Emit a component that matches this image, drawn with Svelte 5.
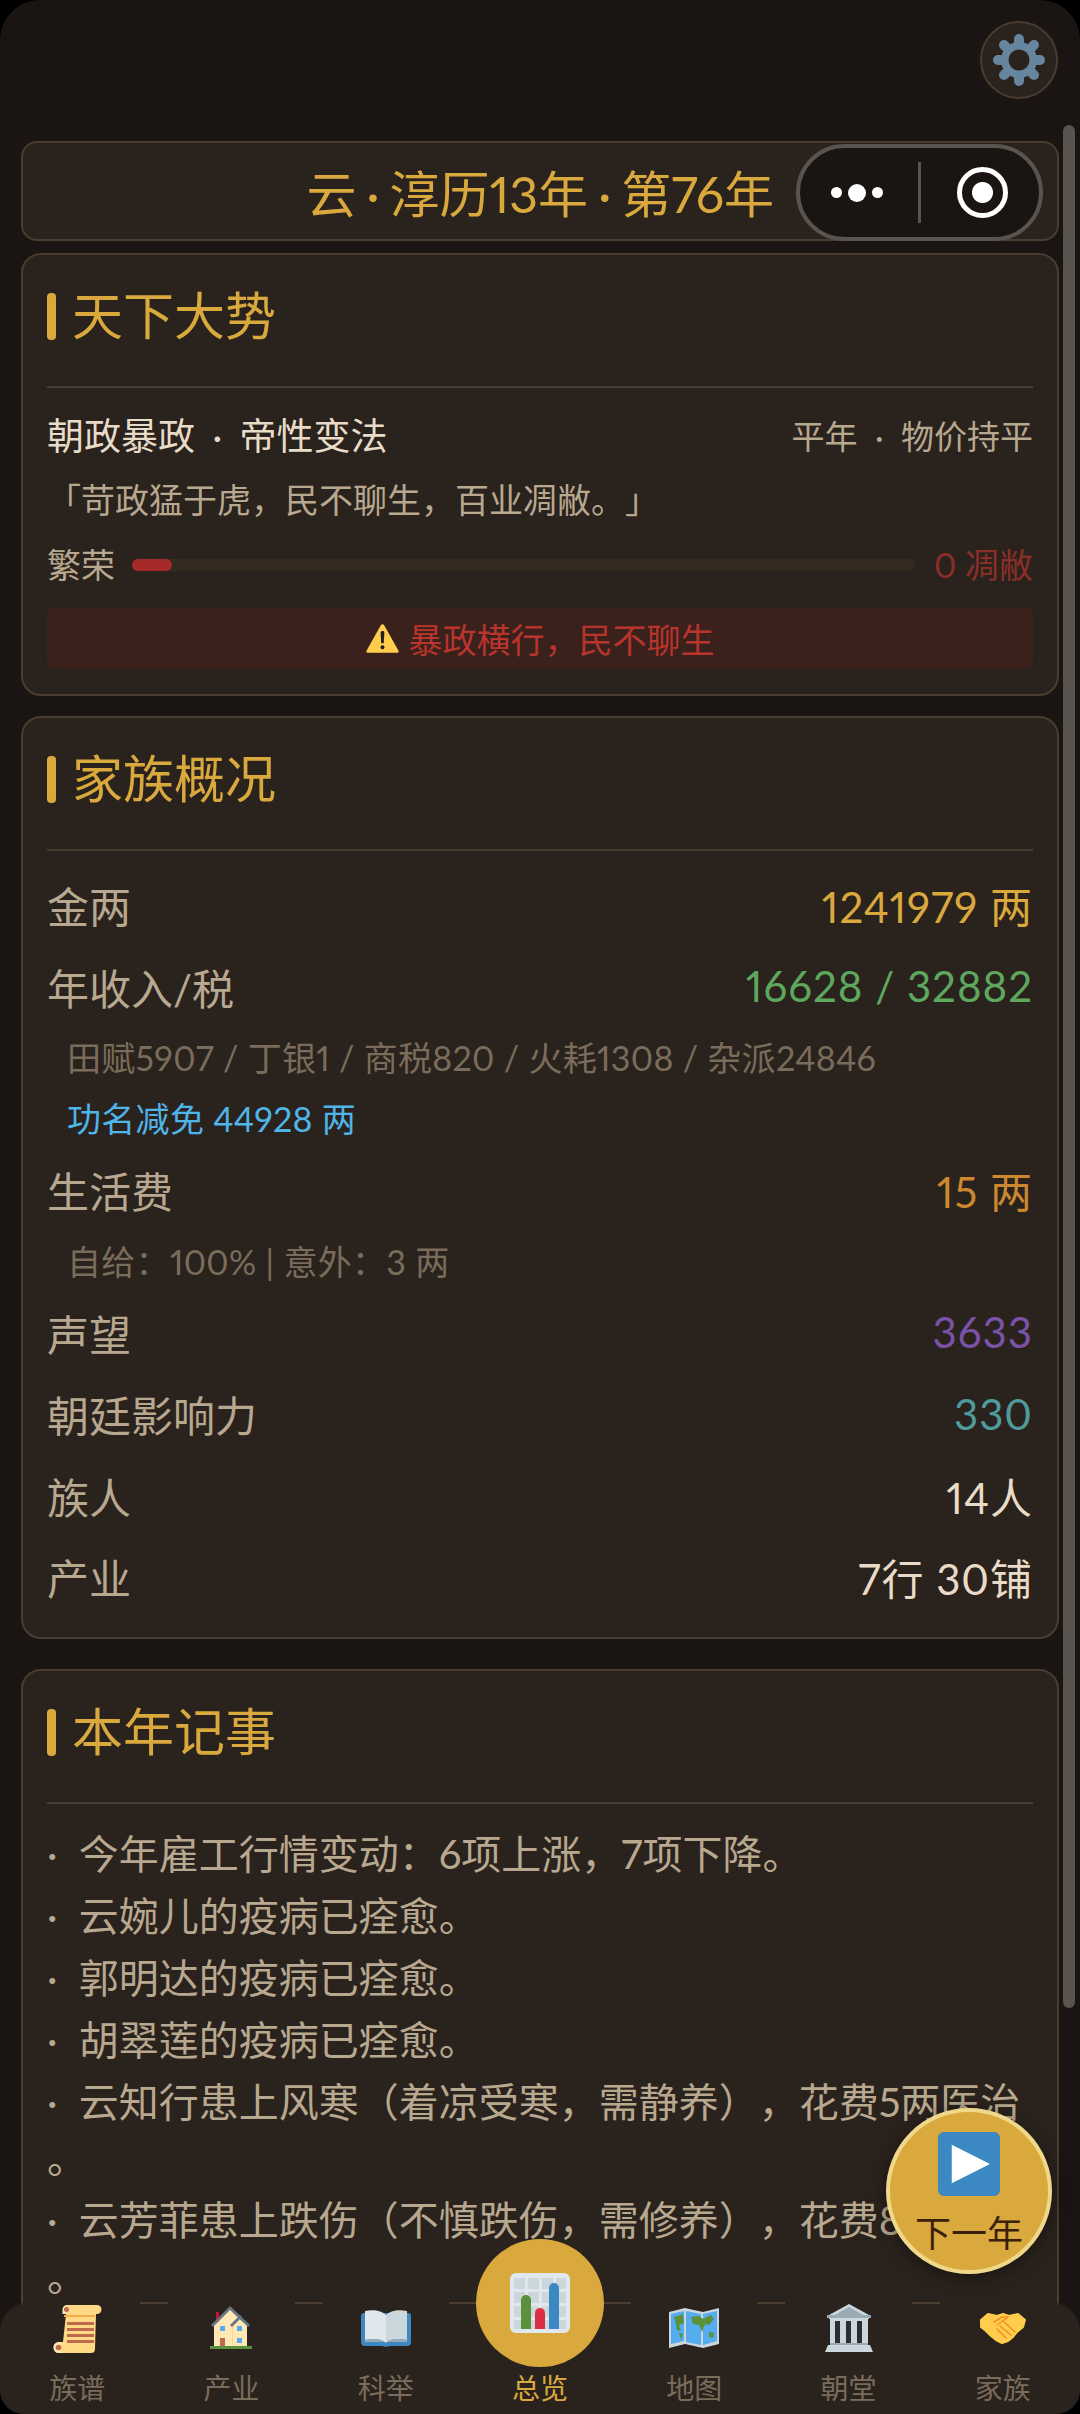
<script>
  const rows1 = [
    { label: '金两', value: '1241979 两', cls: 'gold' },
    { label: '年收入/税', value: '16628 / 32882', cls: 'green' }
  ];
  const rows2 = [
    { label: '声望', value: '3633', cls: 'purple' },
    { label: '朝廷影响力', value: '330', cls: 'teal' },
    { label: '族人', value: '14人', cls: 'white' },
    { label: '产业', value: '7行 30铺', cls: 'white' }
  ];
  const logs = [
    '· 今年雇工行情变动：6项上涨，7项下降。',
    '· 云婉儿的疫病已痊愈。',
    '· 郭明达的疫病已痊愈。',
    '· 胡翠莲的疫病已痊愈。',
    '· 云知行患上风寒（着凉受寒，需静养），花费5两医治。',
    '· 云芳菲患上跌伤（不慎跌伤，需修养），花费8两医治。',
    '· 张氏的疫病已痊愈。'
  ];
  const tabs = [
    { name: '族谱', icon: 'scroll' },
    { name: '产业', icon: 'house' },
    { name: '科举', icon: 'book' },
    { name: '总览', icon: 'chart', active: true },
    { name: '地图', icon: 'map' },
    { name: '朝堂', icon: 'bank' },
    { name: '家族', icon: 'hands' }
  ];
</script>

<div class="screen">
  <div class="topbar">
    <button class="gear" aria-label="设置">
      <svg viewBox="-26 -26 52 52" width="52" height="52">
        <g stroke="#66859f" stroke-width="10" stroke-linecap="round">
          <path d="M0-21V21M-21 0H21M-15-15 15 15M-15 15 15-15"/>
        </g>
        <circle r="18" fill="#66859f"/>
        <circle r="10.500" fill="#2a221d"/>
      </svg>
    </button>
  </div>

  <div class="content">
    <div class="card title-card">
      <span class="era">云<i>·</i>淳历13年<i>·</i>第76年</span>
    </div>

    <section class="card">
      <h2 class="head">天下大势</h2>
      <div class="split">
        <span class="policy">朝政暴政 · 帝性变法</span>
        <span class="harvest">平年 · 物价持平</span>
      </div>
      <p class="quote">「苛政猛于虎，民不聊生，百业凋敝。」</p>
      <div class="meter">
        <span class="meter-label">繁荣</span>
        <div class="track"><div class="fill" style="width: 5.1%"></div></div>
        <span class="meter-value">0 凋敝</span>
      </div>
      <div class="alert">
        <svg viewBox="0 0 36 36" width="33" height="33">
          <path fill="#ffcc4d" d="M2.2 33.500c-1.600 0-2.300-1.100-1.500-2.500L16.300 3.400c.8-1.400 2.600-1.400 3.400 0L35.300 31c.8 1.400.1 2.500-1.500 2.500z"/>
          <path fill="#231f20" d="M15.800 27.500a2.200 2.200 0 1 1 4.400 0 2.200 2.200 0 0 1-4.400 0zM16 11.500c0-1.200.9-1.800 2-1.800s2 .6 2 1.800c0 3.600-.5 8.800-.5 10.500 0 1-.7 1.300-1.500 1.300s-1.500-.3-1.500-1.300c0-1.700-.5-6.900-.5-10.500z"/>
        </svg>
        <span>暴政横行，民不聊生</span>
      </div>
    </section>

    <section class="card">
      <h2 class="head">家族概况</h2>
      <div class="rows">
        {#each rows1 as r}
          <div class="row"><span>{r.label}</span><span class="val {r.cls}">{r.value}</span></div>
        {/each}
        <div class="sub">田赋5907 / 丁银1 / 商税820 / 火耗1308 / 杂派24846</div>
        <div class="sub blue">功名减免 44928 两</div>
        <div class="row"><span>生活费</span><span class="val orange">15 两</span></div>
        <div class="sub">自给：100% | 意外：3 两</div>
        {#each rows2 as r}
          <div class="row"><span>{r.label}</span><span class="val {r.cls}">{r.value}</span></div>
        {/each}
      </div>
    </section>

    <section class="card">
      <h2 class="head">本年记事</h2>
      <div class="logs">
        {#each logs as line}
          <p>{line}</p>
        {/each}
      </div>
    </section>
  </div>

  <button class="next">
    <svg viewBox="0 0 36 36" width="62" height="64" preserveAspectRatio="none">
      <rect width="36" height="36" rx="3.500" fill="#3b88c3"/>
      <path fill="#fff" d="M8 7.200 30.200 18 8 28.800z"/>
    </svg>
    <span>下一年</span>
  </button>

  <nav class="tabs">
    {#each tabs as t}
      <div class="tab" class:active={t.active}>
        <div class="icon">
          {#if t.icon === 'scroll'}
            <svg viewBox="0 0 49 49" width="49" height="49">
              <path fill="#ffd983" d="M14 1h30a4.500 4.500 0 0 1 0 9h-1l-1 35a4 4 0 0 1-4 4H6a5.500 5.500 0 0 1 0-11h4z"/>
              <path fill="#ffe8b6" d="M14 1a4.500 4.500 0 0 0-4.500 4.500V10h4zM6 38a5.500 5.500 0 0 0 0 11h6a5.500 5.500 0 0 1-1-11z"/>
              <path fill="#f4ac4b" d="M11 11h31v2H11z"/>
              <circle cx="13.500" cy="5.500" r="2.500" fill="#c1694f"/>
              <circle cx="5.500" cy="43.500" r="2.800" fill="#c1694f"/>
              <path fill="#c1694f" d="M14 18h27v3H14zM14 24h27v3H14zM14 30h27v3H14zM14 36h27v3H14z"/>
            </svg>
          {:else if t.icon === 'house'}
            <svg viewBox="0 0 42 46" width="42" height="46">
              <path fill="#be1931" d="M6 7h3v8H6z"/>
              <path fill="#ffe8b6" d="M4 18 20 3l17 16v22H4z"/>
              <path fill="#ffd983" d="M22 20h1v21h-1z"/>
              <path fill="#66757f" d="M1 20 20 1l20 19-2 2L20 5 3 22z"/>
              <path fill="#66757f" d="m20 20 10-10 2 2-10 10z"/>
              <path fill="#55acee" d="M10 21h5v5h-5zM27 21h5v5h-5zM27 33h5v5h-5z"/>
              <path fill="#c1694f" d="M10 33h5v8h-5z"/>
              <path fill="#5c913b" d="M0 41h42v3H0z"/>
            </svg>
          {:else if t.icon === 'book'}
            <svg viewBox="0 0 50 38" width="50" height="38">
              <path fill="#3b88c3" d="M3 4h44a3 3 0 0 1 3 3v26a4 4 0 0 1-4 4H29l-4 1-4-1H4a4 4 0 0 1-4-4V7a3 3 0 0 1 3-3z"/>
              <path fill="#ccd6dd" d="M25 6c4-4 12-6 21-4v29c-9-2-17-1-21 3z"/>
              <path fill="#e1e8ed" d="M25 6C21 2 13 0 4 2v29c9-2 17-1 21 3z"/>
              <path fill="#99aab5" d="M4 31c9-2 17-1 21 3 4-4 12-5 21-3v2H4z"/>
            </svg>
          {:else if t.icon === 'chart'}
            <svg viewBox="0 0 60 60" width="60" height="60">
              <rect width="60" height="60" rx="6" fill="#e1e8ed"/>
              <path fill="#ccd6dd" d="M4 5h11v11H4zM18 5h11v11H18zM32 5h11v11H32zM46 5h10v11H46zM4 19h11v11H4zM18 19h11v11H18zM32 19h11v11H32zM46 19h10v11H46zM4 33h11v11H4zM18 33h11v11H18zM32 33h11v11H32zM46 33h10v11H46zM4 47h11v9H4zM18 47h11v9H18zM32 47h11v9H32zM46 47h10v9H46z"/>
              <path fill="#5c913b" d="M11 56V27a5 5 0 0 1 10 0v29z"/>
              <path fill="#dd2e44" d="M25 56V40a5 5 0 0 1 10 0v16z"/>
              <path fill="#3b88c3" d="M39 56V15a5 5 0 0 1 10 0v41z"/>
            </svg>
          {:else if t.icon === 'map'}
            <svg viewBox="0 0 50 40" width="50" height="40">
              <path fill="#ccd6dd" d="M0 4 16 0l18 4 16-4v36l-16 4-18-4-16 4z"/>
              <path fill="#55acee" d="M2 6 15 3v30L2 36zM17 3l15 3v31l-15-3zM34 6l14-3v30l-14 4z"/>
              <path fill="#5c913b" d="M5 9l9-3 1 9-5 2 2 6-4-1-1-6zM22 9l8-1 4 3 8-4 3 4-5 6-4-1-3 8-3-7-6-1zM10 25l4 1-2 6zM40 24l5 1-1 5-4-1z"/>
            </svg>
          {:else if t.icon === 'bank'}
            <svg viewBox="0 0 48 48" width="48" height="48">
              <path fill="#ccd6dd" d="M24 0 44 11v4H4v-4z"/>
              <path fill="#99aab5" d="M2 11h44v3H2zM24 3l14 8H10z"/>
              <path fill="#ccd6dd" d="M5 15h38v26H5z"/>
              <path fill="#292f33" d="M10 17h5v22h-5zM21 17h5v22h-5zM32 17h5v22h-5z"/>
              <path fill="#99aab5" d="M5 39h38v2H5z"/>
              <path fill="#ccd6dd" d="M3 41h42l3 7H0z"/>
            </svg>
          {:else if t.icon === 'hands'}
            <svg viewBox="0 0 46 32" width="46" height="32">
              <path fill="#ffcc4d" stroke="#ffcc4d" stroke-width="2" stroke-linejoin="round" d="M1 8 8 2l9 2 6-2 6 2 9-2 7 6-2 7-6 5-4 5-5 4-6 2-6-3-5-4-5-5-5-4z"/>
              <path fill="none" stroke="#f19020" stroke-width="1.500" stroke-linecap="round" stroke-linejoin="round" d="M14 10l8-5h6l-8 6-3 2M24 10l11 10M20 14l11 9M17 17l9 9"/>
            </svg>
          {/if}
        </div>
        <span class="tab-name">{t.name}</span>
      </div>
    {/each}
  </nav>

  <div class="capsule">
    <div class="dots"><i></i><b></b><i></i></div>
    <div class="divider"></div>
    <div class="target"><span></span></div>
  </div>
  <div class="scrollbar"></div>
</div>

<style>
  :global(body) {
    margin: 0;
    background: #000;
  }
  .screen {
    position: relative;
    width: 1080px;
    height: 2414px;
    overflow: hidden;
    border-radius: 40px 40px 24px 24px;
    background: #1a1512;
    font-family: Lato, "Noto Sans CJK SC", sans-serif;
    font-variant-numeric: proportional-nums;
    text-spacing-trim: space-all;
    color: #b8a88f;
  }
  .topbar {
    display: flex;
    justify-content: flex-end;
    padding: 21px 22px 0 0;
    height: 120px;
    box-sizing: border-box;
  }
  .gear {
    width: 78px;
    height: 78px;
    padding: 0;
    border-radius: 50%;
    border: 2px solid #4a3c2e;
    background: #2a221d;
    display: flex;
    align-items: center;
    justify-content: center;
  }
  .content {
    padding: 21px 21px 0;
    display: flex;
    flex-direction: column;
  }
  .card {
    background: #2a221d;
    border: 2px solid #4a3c2e;
    border-radius: 20px;
    padding: 25px 24px 19px;
    box-sizing: border-box;
  }
  .title-card {
    height: 100px;
    padding: 0 283px 0 0;
    display: flex;
    align-items: center;
    justify-content: flex-end;
    margin-bottom: 12px;
    border-radius: 16px;
  }
  .era {
    color: #d9a93e;
    font-size: 50px;
  }
  .era i {
    font-style: normal;
    margin: 0 10px;
  }
  section.card + section.card {
    margin-top: 20px;
  }
  section.card + section.card + section.card {
    margin-top: 30px;
  }
  .head {
    margin: 0;
    font-weight: 400;
    font-size: 51px;
    line-height: 72px;
    color: #d9a93e;
    padding: 0 0 34px 25px;
    border-bottom: 2px solid #4a3c2e;
    position: relative;
  }
  .head::before {
    content: "";
    position: absolute;
    left: 0;
    top: 13px;
    width: 9px;
    height: 47px;
    border-radius: 4px;
    background: #d9a93e;
  }
  .split {
    display: flex;
    justify-content: space-between;
    align-items: center;
    margin-top: 23px;
    line-height: 50px;
    word-spacing: 8px;
  }
  .policy {
    color: #e8dcc8;
    font-size: 37px;
  }
  .harvest {
    font-size: 33px;
    word-spacing: 9px;
  }
  .quote {
    margin: 16px 0 0;
    font-size: 34px;
    line-height: 46px;
  }
  .meter {
    display: flex;
    align-items: center;
    margin-top: 17px;
    font-size: 34px;
    line-height: 50px;
  }
  .track {
    flex: 1;
    height: 12px;
    margin: 0 19px 0 17px;
    border-radius: 6px;
    background: #352a20;
  }
  .fill {
    height: 100%;
    border-radius: 6px;
    background: #a52a2a;
  }
  .meter-value {
    color: #8a2f28;
  }
  .alert {
    margin: 18px 0 6px;
    height: 61px;
    border-radius: 6px;
    background: #3a211c;
    color: #b8342c;
    font-size: 34px;
    display: flex;
    align-items: center;
    justify-content: center;
    gap: 10px;
  }
  .rows {
    margin-top: 13px;
  }
  .row {
    display: flex;
    justify-content: space-between;
    align-items: center;
    height: 81.500px;
    font-size: 42px;
  }
  .val {
    letter-spacing: 1px;
  }
  .sub {
    font-size: 34px;
    line-height: 61px;
    padding-left: 20px;
    letter-spacing: 0.3px;
    color: #7a6c5a;
  }
  .gold { color: #d9a93e; }
  .green { color: #5da85d; }
  .orange { color: #cc8830; }
  .purple { color: #7a52a8; }
  .teal { color: #4f9a9a; }
  .white { color: #e8dcc8; }
  .sub.blue { color: #4fb4e8; }
  .logs {
    margin-top: 22px;
    font-size: 40px;
    line-height: 56px;
    word-spacing: 11px;
  }
  .logs p {
    margin: 0 0 6px;
    line-break: anywhere;
  }
  .next {
    position: absolute;
    left: 886px;
    top: 2108px;
    width: 166px;
    height: 166px;
    box-sizing: border-box;
    padding: 20px 0 0;
    border-radius: 50%;
    border: 4px solid #f0d88a;
    background: #d9a93e;
    color: #3a2008;
    font-family: inherit;
    font-size: 36px;
    box-shadow: 0 4px 20px rgba(0, 0, 0, 0.4);
    display: flex;
    flex-direction: column;
    align-items: center;
    gap: 14px;
    line-height: 46px;
  }
  .tabs {
    position: absolute;
    left: 0;
    right: 0;
    bottom: 0;
    height: 112px;
    display: flex;
    background: #2a221d;
    border-radius: 30px 30px 0 0;
  }
  .tab {
    flex: 1;
    display: flex;
    flex-direction: column;
    align-items: center;
    font-size: 28px;
    color: #7a6c5a;
    position: relative;
  }
  .tab + .tab::before {
    content: "";
    position: absolute;
    left: -14px;
    top: 0;
    width: 28px;
    height: 2px;
    background: #4a3c2e;
  }
  .icon {
    height: 52px;
    display: flex;
    align-items: center;
    justify-content: center;
  }
  .tab-name {
    margin-top: 14px;
    line-height: 40px;
  }
  .tab.active { color: #d9a93e; }
  .tab.active .icon {
    position: absolute;
    top: -63px;
    z-index: 1;
    width: 128px;
    height: 128px;
    border-radius: 50%;
    background: #d9a93e;
  }
  .tab.active .tab-name { margin-top: 66px; }
  .capsule {
    position: absolute;
    left: 796px;
    top: 144px;
    width: 247px;
    height: 97px;
    box-sizing: border-box;
    border: 4px solid #5a544e;
    border-radius: 49px;
    background: #1a1512;
    display: flex;
    align-items: center;
  }
  .dots {
    width: 118px;
    box-sizing: border-box;
    padding-right: 4px;
    display: flex;
    align-items: center;
    justify-content: center;
    gap: 6px;
  }
  .dots i, .dots b {
    display: block;
    background: #fff;
    border-radius: 50%;
  }
  .dots i { width: 11px; height: 11px; }
  .dots b { width: 18px; height: 18px; }
  .divider {
    width: 3px;
    height: 61px;
    background: #5a544e;
  }
  .target {
    flex: 1;
    padding-left: 4px;
    display: flex;
    justify-content: center;
  }
  .target span {
    display: block;
    box-sizing: border-box;
    width: 51px;
    height: 51px;
    border: 5px solid #fff;
    border-radius: 50%;
    background: radial-gradient(circle, #fff 10px, #1a1512 11px);
  }
  .scrollbar {
    position: absolute;
    left: 1063px;
    top: 125px;
    width: 12px;
    height: 1883px;
    border-radius: 6px;
    background: #5a544e;
  }
</style>
